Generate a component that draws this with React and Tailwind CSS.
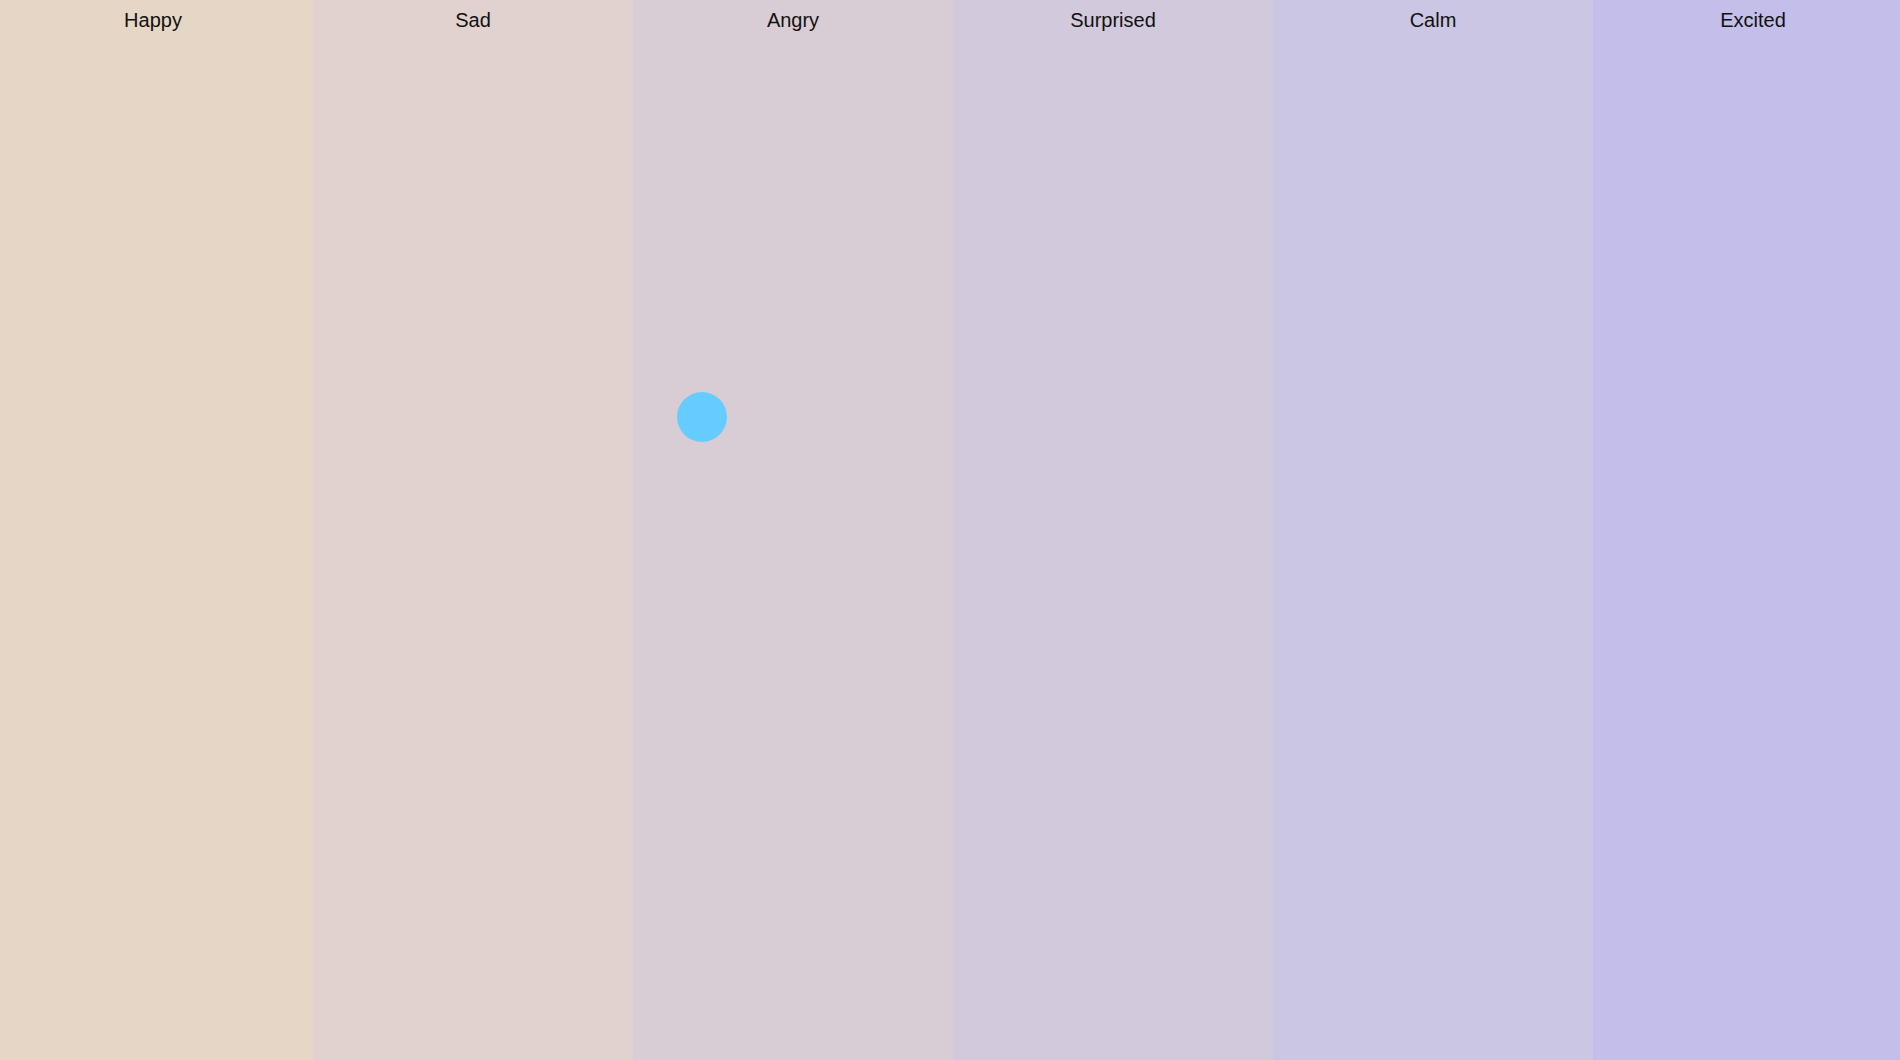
import React from "react";

const moods = [
  { name: "Happy", bg: "bg-[#e6d6c6]" },
  { name: "Sad", bg: "bg-[#e1d2cf]" },
  { name: "Angry", bg: "bg-[#d9cdd5]" },
  { name: "Surprised", bg: "bg-[#d3c9dc]" },
  { name: "Calm", bg: "bg-[#cbc6e4]" },
  { name: "Excited", bg: "bg-[#c3bfea]" },
];

export default function App() {
  return (
    <div className="relative w-full h-[1060px] overflow-hidden font-['Liberation_Sans',Arial,sans-serif] text-[#111111]">
      <div className="flex h-full -ml-[7px]">
        {moods.map((m) => (
          <div key={m.name} className={`w-[320px] shrink-0 h-full ${m.bg} text-center pt-[9px] text-[20px] leading-[23px]`}>
            {m.name}
          </div>
        ))}
      </div>
      <div className="absolute left-[677px] top-[392px] w-[50px] h-[50px] rounded-full bg-[#66ccff]" />
    </div>
  );
}
